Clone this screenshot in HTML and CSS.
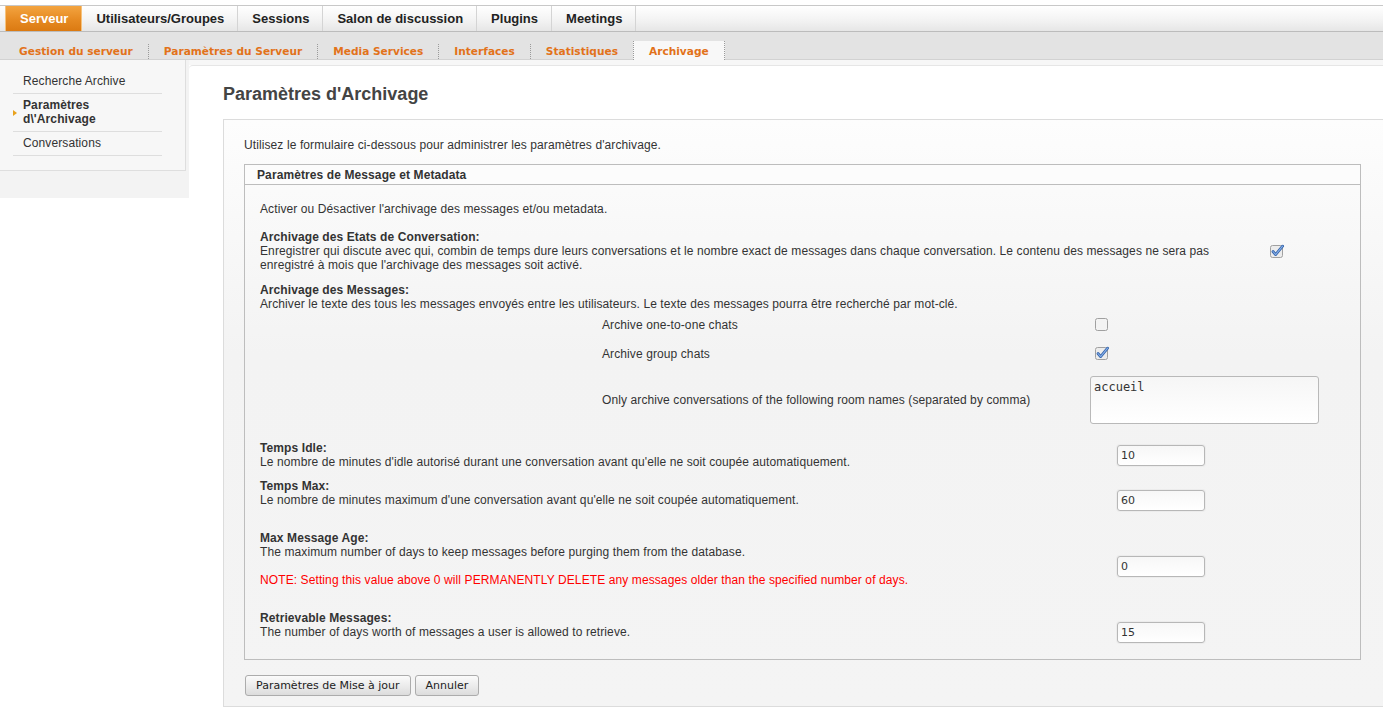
FILE: index.html
```html
<!DOCTYPE html>
<html lang="fr">
<head>
    <meta charset="UTF-8">
    <title>Paramètres d'Archivage</title>
    <link rel="stylesheet" href="styles.css">
</head>
<body>
    <div class="topbar">
        <ul class="tabs">
            <li class="active"><a href="#">Serveur</a></li>
            <li><a href="#">Utilisateurs/Groupes</a></li>
            <li><a href="#">Sessions</a></li>
            <li><a href="#">Salon de discussion</a></li>
            <li><a href="#">Plugins</a></li>
            <li><a href="#">Meetings</a></li>
        </ul>
    </div>

    <div class="subnav">
        <ul>
            <li><a href="#">Gestion du serveur</a></li>
            <li><a href="#">Paramètres du Serveur</a></li>
            <li><a href="#">Media Services</a></li>
            <li><a href="#">Interfaces</a></li>
            <li><a href="#">Statistiques</a></li>
            <li class="current"><a href="#">Archivage</a></li>
        </ul>
    </div>

    <div class="layout">
        <aside class="sidebar">
            <div class="sidebox">
                <ul>
                    <li><a href="#">Recherche Archive</a></li>
                    <li class="current"><a href="#">Paramètres d\'Archivage</a></li>
                    <li><a href="#">Conversations</a></li>
                </ul>
            </div>
        </aside>

        <main class="main">
            <h1>Paramètres d'Archivage</h1>

            <div class="panel">
                <p class="intro">Utilisez le formulaire ci-dessous pour administrer les paramètres d'archivage.</p>

                <div class="box">
                    <div class="box-head">Paramètres de Message et Metadata</div>
                    <div class="box-body">
                        <p class="lead">Activer ou Désactiver l'archivage des messages et/ou metadata.</p>

                        <div class="row row-state">
                            <div class="txt txt-wide">
                                <b>Archivage des Etats de Conversation:</b><br>
                                Enregistrer qui discute avec qui, combin de temps dure leurs conversations et le nombre exact de messages dans chaque conversation. Le contenu des messages ne sera pas enregistré à mois que l'archivage des messages soit activé.
                            </div>
                            <span class="check check-state">
                                <svg width="13" height="13" viewBox="0 0 13 13"><rect x="0.5" y="0.5" width="12" height="12" rx="2" fill="#ececec" stroke="#a0a0a0"/><path d="M3 6.5 L5.6 9.6 L12.6 1.2" fill="none" stroke="#3464ab" stroke-width="2.8" stroke-linecap="round" stroke-linejoin="round"/><path d="M3 6.5 L5.6 9.6 L12.6 1.2" fill="none" stroke="#86aee8" stroke-width="1.1" stroke-linecap="round" stroke-linejoin="round"/></svg>
                            </span>
                        </div>

                        <div class="row-msg">
                            <b>Archivage des Messages:</b><br>
                            Archiver le texte des tous les messages envoyés entre les utilisateurs. Le texte des messages pourra être recherché par mot-clé.
                        </div>

                        <div class="sub">
                            <div class="sub-row">
                                <span class="sub-label">Archive one-to-one chats</span>
                                <span class="check">
                                    <svg width="13" height="13" viewBox="0 0 13 13"><rect x="0.5" y="0.5" width="12" height="12" rx="2" fill="#f3f3f3" stroke="#a0a0a0"/></svg>
                                </span>
                            </div>
                            <div class="sub-row">
                                <span class="sub-label">Archive group chats</span>
                                <span class="check">
                                    <svg width="13" height="13" viewBox="0 0 13 13"><rect x="0.5" y="0.5" width="12" height="12" rx="2" fill="#ececec" stroke="#a0a0a0"/><path d="M3 6.5 L5.6 9.6 L12.6 1.2" fill="none" stroke="#3464ab" stroke-width="2.8" stroke-linecap="round" stroke-linejoin="round"/><path d="M3 6.5 L5.6 9.6 L12.6 1.2" fill="none" stroke="#86aee8" stroke-width="1.1" stroke-linecap="round" stroke-linejoin="round"/></svg>
                                </span>
                            </div>
                            <div class="sub-row sub-row-tall">
                                <span class="sub-label">Only archive conversations of the following room names (separated by comma)</span>
                                <textarea class="rooms">accueil</textarea>
                            </div>
                        </div>

                        <div class="field">
                            <div class="txt">
                                <b>Temps Idle:</b><br>
                                Le nombre de minutes d'idle autorisé durant une conversation avant qu'elle ne soit coupée automatiquement.
                            </div>
                            <input class="num" type="text" value="10">
                        </div>

                        <div class="field">
                            <div class="txt txt-pad">
                                <b>Temps Max:</b><br>
                                Le nombre de minutes maximum d'une conversation avant qu'elle ne soit coupée automatiquement.
                            </div>
                            <input class="num" type="text" value="60">
                        </div>

                        <div class="field">
                            <div class="txt txt-pad">
                                <b>Max Message Age:</b><br>
                                The maximum number of days to keep messages before purging them from the database.
                                <p class="note">NOTE: Setting this value above 0 will PERMANENTLY DELETE any messages older than the specified number of days.</p>
                            </div>
                            <input class="num" type="text" value="0">
                        </div>

                        <div class="field">
                            <div class="txt txt-pad">
                                <b>Retrievable Messages:</b><br>
                                The number of days worth of messages a user is allowed to retrieve.
                            </div>
                            <input class="num" type="text" value="15">
                        </div>
                    </div>
                </div>

                <div class="actions">
                    <button type="button">Paramètres de Mise à jour</button>
                    <button type="button">Annuler</button>
                </div>
            </div>
        </main>
    </div>
</body>
</html>
```

FILE: styles.css
```css
/* Page */
body {
    margin: 0;
    font-family: "Liberation Sans", Arial, sans-serif;
    font-size: 12px;
    line-height: 14px;
    letter-spacing: 0.1px;
    color: #333;
    background: #fff;
}

ul {
    list-style: none;
    margin: 0;
    padding: 0;
}

a {
    text-decoration: none;
}

/* Top tabs */
.topbar {
    margin-top: 5px;
    height: 25px;
    border-top: 1px solid #c8c8c8;
    border-bottom: 1px solid #bcbcbc;
    background: linear-gradient(#ffffff, #f2f2f2 60%, #e6e6e6);
    padding-left: 5px;
    letter-spacing: 0;
}

.tabs {
    display: flex;
    height: 25px;
}

.tabs li {
    border-right: 1px solid #d4d4d4;
}

.tabs li a {
    display: block;
    height: 25px;
    line-height: 25px;
    padding: 0 13px 0 14px;
    font-weight: bold;
    font-size: 13px;
    color: #222;
}

.tabs li.active {
    border: 1px solid #f6c27c;
    border-top: 0;
    border-bottom: 0;
}

.tabs li.active a {
    color: #fff;
    background: linear-gradient(#f3a440, #e68a22 55%, #db7a12);
}

/* Sub navigation */
.subnav {
    background: #e3e3e3;
    padding: 9px 0 0 4px;
    height: 18px;
    border-bottom: 1px solid #d2d2d2;
    letter-spacing: 0;
}

.subnav ul {
    display: flex;
}

.subnav li {
    border-right: 1px dotted #9a9a9a;
    margin-top: 3px;
    height: 15px;
}

.subnav li a {
    display: block;
    padding: 0 15px;
    margin-top: -2px;
    line-height: 18px;
    font-family: "DejaVu Sans", Verdana, sans-serif;
    font-size: 10.6px;
    font-weight: bold;
    color: #e2721a;
}

.subnav li.current {
    margin-top: 0;
    height: 19px;
    background: #f8f8f8;
    border-left: 1px dotted #9a9a9a;
    margin-left: -1px;
}

.subnav li.current a {
    margin-top: 1px;
}

/* Layout */
.layout {
    display: flex;
    background: linear-gradient(#f7f7f7, #f7f7f7) top / 100% 5px no-repeat;
}

.sidebar {
    width: 189px;
    flex-shrink: 0;
    background: #f3f3f3;
    align-self: flex-start;
    padding-bottom: 27px;
}

.sidebox {
    width: 185px;
    background: #f7f7f7;
    border-right: 1px solid #dedede;
    border-bottom: 1px solid #dedede;
    padding: 10px 0 14px;
}

.sidebox ul {
    margin: 0 23px 0 13px;
}

.sidebox li {
    position: relative;
    padding: 4px 0 5px 10px;
    border-bottom: 1px solid #dedede;
}

.sidebox li a {
    color: #333;
}

.sidebox li.current a {
    font-weight: bold;
}

.sidebox li.current::before {
    content: "";
    position: absolute;
    left: 0;
    top: 16px;
    border-left: 4px solid #e8a21e;
    border-top: 3px solid transparent;
    border-bottom: 3px solid transparent;
}

/* Main */
.main {
    flex: 1;
    margin-top: 5px;
    background: #fff;
    border-top: 1px solid #e6e6e6;
    border-top-left-radius: 4px;
    padding-left: 34px;
}

h1 {
    margin: 17px 0 0;
    font-size: 18px;
    line-height: 22px;
    letter-spacing: 0;
    color: #444;
}

.panel {
    margin-top: 14px;
    border: 1px solid #dcdcdc;
    border-right: 0;
    background: linear-gradient(#fdfdfd, #f3f3f3 40%, #f4f4f4);
    padding: 18px 22px 10px 20px;
}

.intro {
    margin: 0 0 12px;
}

/* Settings box */
.box {
    border: 1px solid #bdbdbd;
}

.box-head {
    height: 19px;
    line-height: 20px;
    padding-left: 12px;
    font-weight: bold;
    background: #fcfcfc;
    border-bottom: 1px solid #bdbdbd;
}

.box-body {
    padding: 17px 15px 6px;
}

.lead {
    margin: 0;
}

.row {
    display: flex;
    align-items: center;
}

.row-state {
    margin-top: 14px;
}

.txt-wide {
    width: 960px;
}

.check {
    display: inline-flex;
}

.check svg {
    overflow: visible;
}

.check-state {
    margin-left: 50px;
}

.row-msg {
    margin-top: 11px;
}

/* Sub options */
.sub {
    margin-top: -1px;
}

.sub-row {
    display: flex;
    align-items: center;
    height: 29px;
    padding-left: 342px;
}

.sub-row-tall {
    height: 63px;
}

.sub-label {
    width: 488px;
}

.sub-row .check {
    margin-left: 5px;
}

.rooms {
    box-sizing: border-box;
    width: 229px;
    height: 48px;
    margin: 0;
    padding: 3px 3px;
    border: 1px solid #b9b9b9;
    border-radius: 3px;
    background: linear-gradient(#f6f6f6, #ffffff);
    font-family: "DejaVu Sans Mono", monospace;
    font-size: 12px;
    line-height: 15px;
    letter-spacing: 0;
    color: #333;
    resize: none;
}

/* Numeric fields */
.field {
    display: flex;
    align-items: center;
    margin-top: 10px;
}

.field .txt {
    width: 857px;
}

.txt-pad {
    padding-bottom: 14px;
}

.note {
    margin: 14px 0 0;
    color: #f00;
}

.num {
    box-sizing: border-box;
    width: 88px;
    height: 21px;
    margin: 0;
    padding: 0 3px;
    border: 1px solid #b7b7b7;
    border-radius: 3px;
    background: linear-gradient(#f7f7f7, #ffffff);
    box-shadow: 0 0 0 1px #ececec;
    font-family: "DejaVu Sans", Verdana, sans-serif;
    font-size: 11px;
    letter-spacing: 0;
    color: #333;
}

/* Buttons */
.actions {
    margin-top: 15px;
    padding-left: 1px;
    display: flex;
    gap: 4px;
}

.actions button {
    height: 21px;
    padding: 0 10px;
    border: 1px solid #acacac;
    border-radius: 3px;
    background: linear-gradient(#fbfbfb, #e9e9e9 60%, #dcdcdc);
    font-family: "DejaVu Sans", Verdana, sans-serif;
    font-size: 11px;
    letter-spacing: 0;
    color: #222;
}
```
